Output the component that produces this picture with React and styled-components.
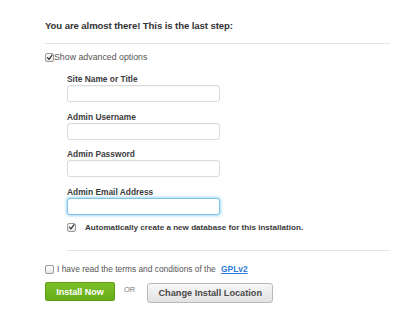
import React from 'react';
import styled, { createGlobalStyle } from 'styled-components';

const GlobalStyle = createGlobalStyle`
	html, body {
		margin: 0;
		padding: 0;
		background: #ffffff;
	}
	body {
		font-family: 'Liberation Sans', Arial, sans-serif;
		color: #444;
	}
`;

const Page = styled.div`
	width: 393px;
	height: 321px;
	box-sizing: border-box;
	padding: 19px 3px 0 45px;
	background: #fff;
`;

const Heading = styled.h3`
	margin: 0;
	font-size: 9.6px;
	line-height: 14px;
	font-weight: 700;
	color: #333;
	letter-spacing: -0.1px;
`;

const Rule = styled.div`
	height: 1px;
	background: #e4e4e4;
	margin-top: ${props => props.$top}px;
	margin-left: ${props => props.$indent || 0}px;
`;

const CheckRow = styled.label`
	display: flex;
	align-items: center;
	gap: ${props => props.$gap}px;
	height: 12px;
	margin-top: ${props => props.$top}px;
	margin-left: ${props => props.$indent || 0}px;
	font-size: ${props => props.$size}px;
	font-weight: ${props => props.$bold ? 700 : 400};
	color: ${props => props.$bold ? '#3a3a3a' : '#555'};
	white-space: pre;
`;

const Box = styled.span`
	display: inline-flex;
	align-items: center;
	justify-content: center;
	box-sizing: border-box;
	width: ${props => props.$size}px;
	height: ${props => props.$size}px;
	border: 1px solid #9a9a9a;
	border-radius: 2px;
	background: linear-gradient(#ffffff, #e9e9e9);
	flex: none;
`;

const Fields = styled.div`
	padding-left: 22px;
	margin-top: 10px;
	display: flex;
	flex-direction: column;
	gap: 8.7px;
`;

const Field = styled.div`
	display: flex;
	flex-direction: column;
`;

const Label = styled.div`
	font-size: 8.4px;
	line-height: 12px;
	font-weight: 700;
	color: #3c3c3c;
`;

const Input = styled.div`
	width: 153px;
	height: 17px;
	box-sizing: border-box;
	border: 1px solid ${props => props.$focus ? '#7fc4e8' : '#dadada'};
	border-radius: 3px;
	background: #fff;
	box-shadow: ${props => props.$focus ? '0 0 3px 1px rgba(110, 190, 235, 0.6)' : 'inset 0 1px 1px rgba(0,0,0,0.03)'};
`;

const Link = styled.a`
	color: #2f7ad8;
	font-weight: 700;
	text-decoration: underline;
`;

const Actions = styled.div`
	display: flex;
	align-items: flex-start;
	margin-top: 7px;
`;

const GreenButton = styled.button`
	width: 70px;
	height: 19px;
	border: 1px solid #5e9d16;
	border-radius: 2px;
	background: linear-gradient(#7cbf2a, #68ad17);
	color: #fff;
	font-family: 'Liberation Sans', Arial, sans-serif;
	font-size: 9px;
	font-weight: 700;
	padding: 0;
`;

const Or = styled.span`
	font-size: 7.5px;
	line-height: 10px;
	color: #777;
	margin: 3px 12px 0 9px;
`;

const GrayButton = styled.button`
	width: 126px;
	height: 20px;
	border: 1px solid #b9b9b9;
	border-radius: 3px;
	background: linear-gradient(#f7f7f7, #e2e2e2);
	color: #4a4a4a;
	font-family: 'Liberation Sans', Arial, sans-serif;
	font-size: 9.2px;
	font-weight: 700;
	padding: 0;
	margin-top: 1px;
`;

const Check = ({ size }) => (
	<svg width={size} height={size} viewBox="0 0 10 10">
		<path d="M2 5.2 L4.2 7.6 L8.6 1.6" fill="none" stroke="#333" strokeWidth="1.8" strokeLinecap="round" strokeLinejoin="round" />
	</svg>
);

const fields = [
	{ label: 'Site Name or Title' },
	{ label: 'Admin Username' },
	{ label: 'Admin Password' },
	{ label: 'Admin Email Address', focus: true },
];

const App = () => {
	return (
		<Page>
			<GlobalStyle />
			<Heading>You are almost there! This is the last step:</Heading>
			<Rule $top={10} />
			<CheckRow $top={7} $gap={0} $size={8.8}>
				<Box $size={9}><Check size={9} /></Box>
				Show advanced options
			</CheckRow>
			<Fields>
				{fields.map(f => (
					<Field key={f.label}>
						<Label>{f.label}</Label>
						<Input $focus={f.focus} />
					</Field>
				))}
			</Fields>
			<CheckRow $top={6} $indent={22} $gap={9} $size={8.1} $bold>
				<Box $size={9}><Check size={8} /></Box>
				Automatically create a new database for this installation.
			</CheckRow>
			<Rule $top={17} $indent={22} />
			<CheckRow $top={12} $gap={3} $size={8.4}>
				<Box $size={9} />
				I have read the terms and conditions of the <Link href="#">GPLv2</Link>
			</CheckRow>
			<Actions>
				<GreenButton>Install Now</GreenButton>
				<Or>OR</Or>
				<GrayButton>Change Install Location</GrayButton>
			</Actions>
		</Page>
	);
};

export default App;
